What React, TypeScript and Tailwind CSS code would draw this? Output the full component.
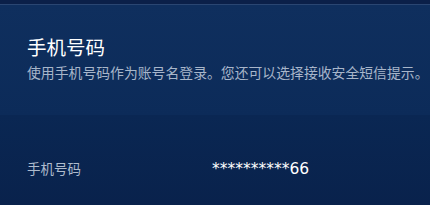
import React from "react";

export default function App() {
  return (
    <div
      className="w-[430px] h-[205px] overflow-hidden flex flex-col bg-[#0a244f]"
      style={{ fontFamily: '"Segoe UI", "Noto Sans CJK SC", "Noto Sans", sans-serif' }}
    >
      <div className="h-[4px] bg-[#0b2049]" />
      <div className="h-px bg-[#2a4672]" />
      <div className="h-[110px] shrink-0 bg-gradient-to-b from-[#0f2f5e] to-[#0c2b59] pl-[27px] pt-[29px]">
        <div className="text-[19.5px] leading-[26px] text-white">手机号码</div>
        <div className="text-[13.85px] leading-[20px] mt-[2px] text-[#a8b6ca] whitespace-nowrap">
          使用手机号码作为账号名登录。您还可以选择接收安全短信提示。
        </div>
      </div>
      <div className="flex-1 bg-gradient-to-b from-[#0a2753] to-[#09224c] pl-[27px] pt-[43px]">
        <div className="flex items-baseline">
          <div className="w-[185px] text-[13.5px] leading-[20px] text-[#aebbcd]">手机号码</div>
          <div
            className="text-[15.5px] leading-[20px] text-white"
            style={{ fontFamily: '"DejaVu Sans", sans-serif' }}
          >
            **********66
          </div>
        </div>
      </div>
    </div>
  );
}
